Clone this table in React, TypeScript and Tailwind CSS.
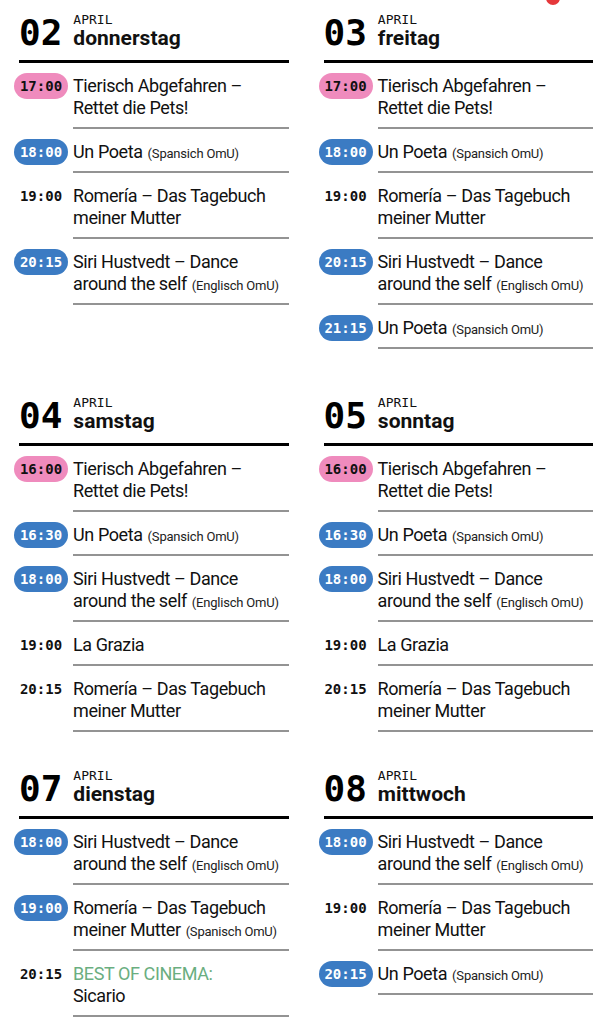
type Show = {
  time: string;
  tag?: "pink" | "blue";
  lines: string[];
  note?: string;
  label?: string;
};

type Day = { num: string; name: string; shows: Show[] };

const tierisch = ["Tierisch Abgefahren –", "Rettet die Pets!"];
const romeria = ["Romería – Das Tagebuch", "meiner Mutter"];
const siri = ["Siri Hustvedt – Dance", "around the self"];

const rows: Day[][] = [
  [
    {
      num: "02",
      name: "donnerstag",
      shows: [
        { time: "17:00", tag: "pink", lines: tierisch },
        { time: "18:00", tag: "blue", lines: ["Un Poeta"], note: "(Spansich OmU)" },
        { time: "19:00", lines: romeria },
        { time: "20:15", tag: "blue", lines: siri, note: "(Englisch OmU)" },
      ],
    },
    {
      num: "03",
      name: "freitag",
      shows: [
        { time: "17:00", tag: "pink", lines: tierisch },
        { time: "18:00", tag: "blue", lines: ["Un Poeta"], note: "(Spansich OmU)" },
        { time: "19:00", lines: romeria },
        { time: "20:15", tag: "blue", lines: siri, note: "(Englisch OmU)" },
        { time: "21:15", tag: "blue", lines: ["Un Poeta"], note: "(Spansich OmU)" },
      ],
    },
  ],
  [
    {
      num: "04",
      name: "samstag",
      shows: [
        { time: "16:00", tag: "pink", lines: tierisch },
        { time: "16:30", tag: "blue", lines: ["Un Poeta"], note: "(Spansich OmU)" },
        { time: "18:00", tag: "blue", lines: siri, note: "(Englisch OmU)" },
        { time: "19:00", lines: ["La Grazia"] },
        { time: "20:15", lines: romeria },
      ],
    },
    {
      num: "05",
      name: "sonntag",
      shows: [
        { time: "16:00", tag: "pink", lines: tierisch },
        { time: "16:30", tag: "blue", lines: ["Un Poeta"], note: "(Spansich OmU)" },
        { time: "18:00", tag: "blue", lines: siri, note: "(Englisch OmU)" },
        { time: "19:00", lines: ["La Grazia"] },
        { time: "20:15", lines: romeria },
      ],
    },
  ],
  [
    {
      num: "07",
      name: "dienstag",
      shows: [
        { time: "18:00", tag: "blue", lines: siri, note: "(Englisch OmU)" },
        { time: "19:00", tag: "blue", lines: romeria, note: "(Spanisch OmU)" },
        { time: "20:15", label: "BEST OF CINEMA:", lines: ["Sicario"] },
      ],
    },
    {
      num: "08",
      name: "mittwoch",
      shows: [
        { time: "18:00", tag: "blue", lines: siri, note: "(Englisch OmU)" },
        { time: "19:00", lines: romeria },
        { time: "20:15", tag: "blue", lines: ["Un Poeta"], note: "(Spansich OmU)" },
      ],
    },
  ],
];

const mono = "font-['DejaVu_Sans_Mono',monospace]";
const sans = "font-['Roboto',sans-serif]";

function TimeTag({ show }: { show: Show }) {
  const base = `flex h-[26px] w-[54px] items-center justify-center rounded-full text-[14px] font-bold ${mono}`;
  if (show.tag === "pink") return <div className={`${base} bg-[#ef8bbd] text-[#111]`}>{show.time}</div>;
  if (show.tag === "blue") return <div className={`${base} bg-[#3b7bc3] text-white`}>{show.time}</div>;
  return <div className={`${base} text-[#111]`}>{show.time}</div>;
}

function ShowRow({ show }: { show: Show }) {
  return (
    <div className="flex">
      <div className="ml-[-5px] w-[54px] shrink-0 pt-[10px]">
        <TimeTag show={show} />
      </div>
      <div className="ml-[5px] flex-1 border-b-2 border-[#939393] pt-[12px] pb-[8px] text-[18px] leading-[22px] tracking-[-0.4px] text-[#111]">
        {show.label && <div className="h-[22px] whitespace-nowrap text-[#6aae80]">{show.label}</div>}
        {show.lines.map((line, i) => (
          <div key={i} className="h-[22px] whitespace-nowrap">
            {line}
            {show.note && i === show.lines.length - 1 && (
              <span className="ml-[5px] text-[13px] leading-none tracking-[-0.2px] text-[#222]">{show.note}</span>
            )}
          </div>
        ))}
      </div>
    </div>
  );
}

function DayBlock({ day }: { day: Day }) {
  return (
    <div>
      <div className="flex gap-[11px] border-b-[3px] border-black pb-[9px] [align-items:last_baseline]">
        <span className={`text-[36px] font-bold leading-[36px] text-black ${mono}`}>{day.num}</span>
        <div>
          <div className={`text-[13px] leading-[14px] text-[#111] ${mono}`}>APRIL</div>
          <div className="text-[21px] font-bold leading-[22px] text-[#111]">{day.name}</div>
        </div>
      </div>
      {day.shows.map((s, i) => (
        <ShowRow key={i} show={s} />
      ))}
    </div>
  );
}

export default function App() {
  const gaps = ["mb-[47px]", "mb-[37px]", ""];
  return (
    <div className={`relative min-h-[1024px] overflow-hidden bg-white pt-[13px] pr-[7px] pl-[19px] ${sans}`}>
      <div className="absolute top-[-9px] left-[546px] h-[14px] w-[14px] rounded-full bg-[#e5383b]" />
      {rows.map((row, r) => (
        <div key={r} className={`grid grid-cols-2 items-start gap-x-[35px] ${gaps[r]}`}>
          {row.map((d) => (
            <DayBlock key={d.num} day={d} />
          ))}
        </div>
      ))}
    </div>
  );
}
